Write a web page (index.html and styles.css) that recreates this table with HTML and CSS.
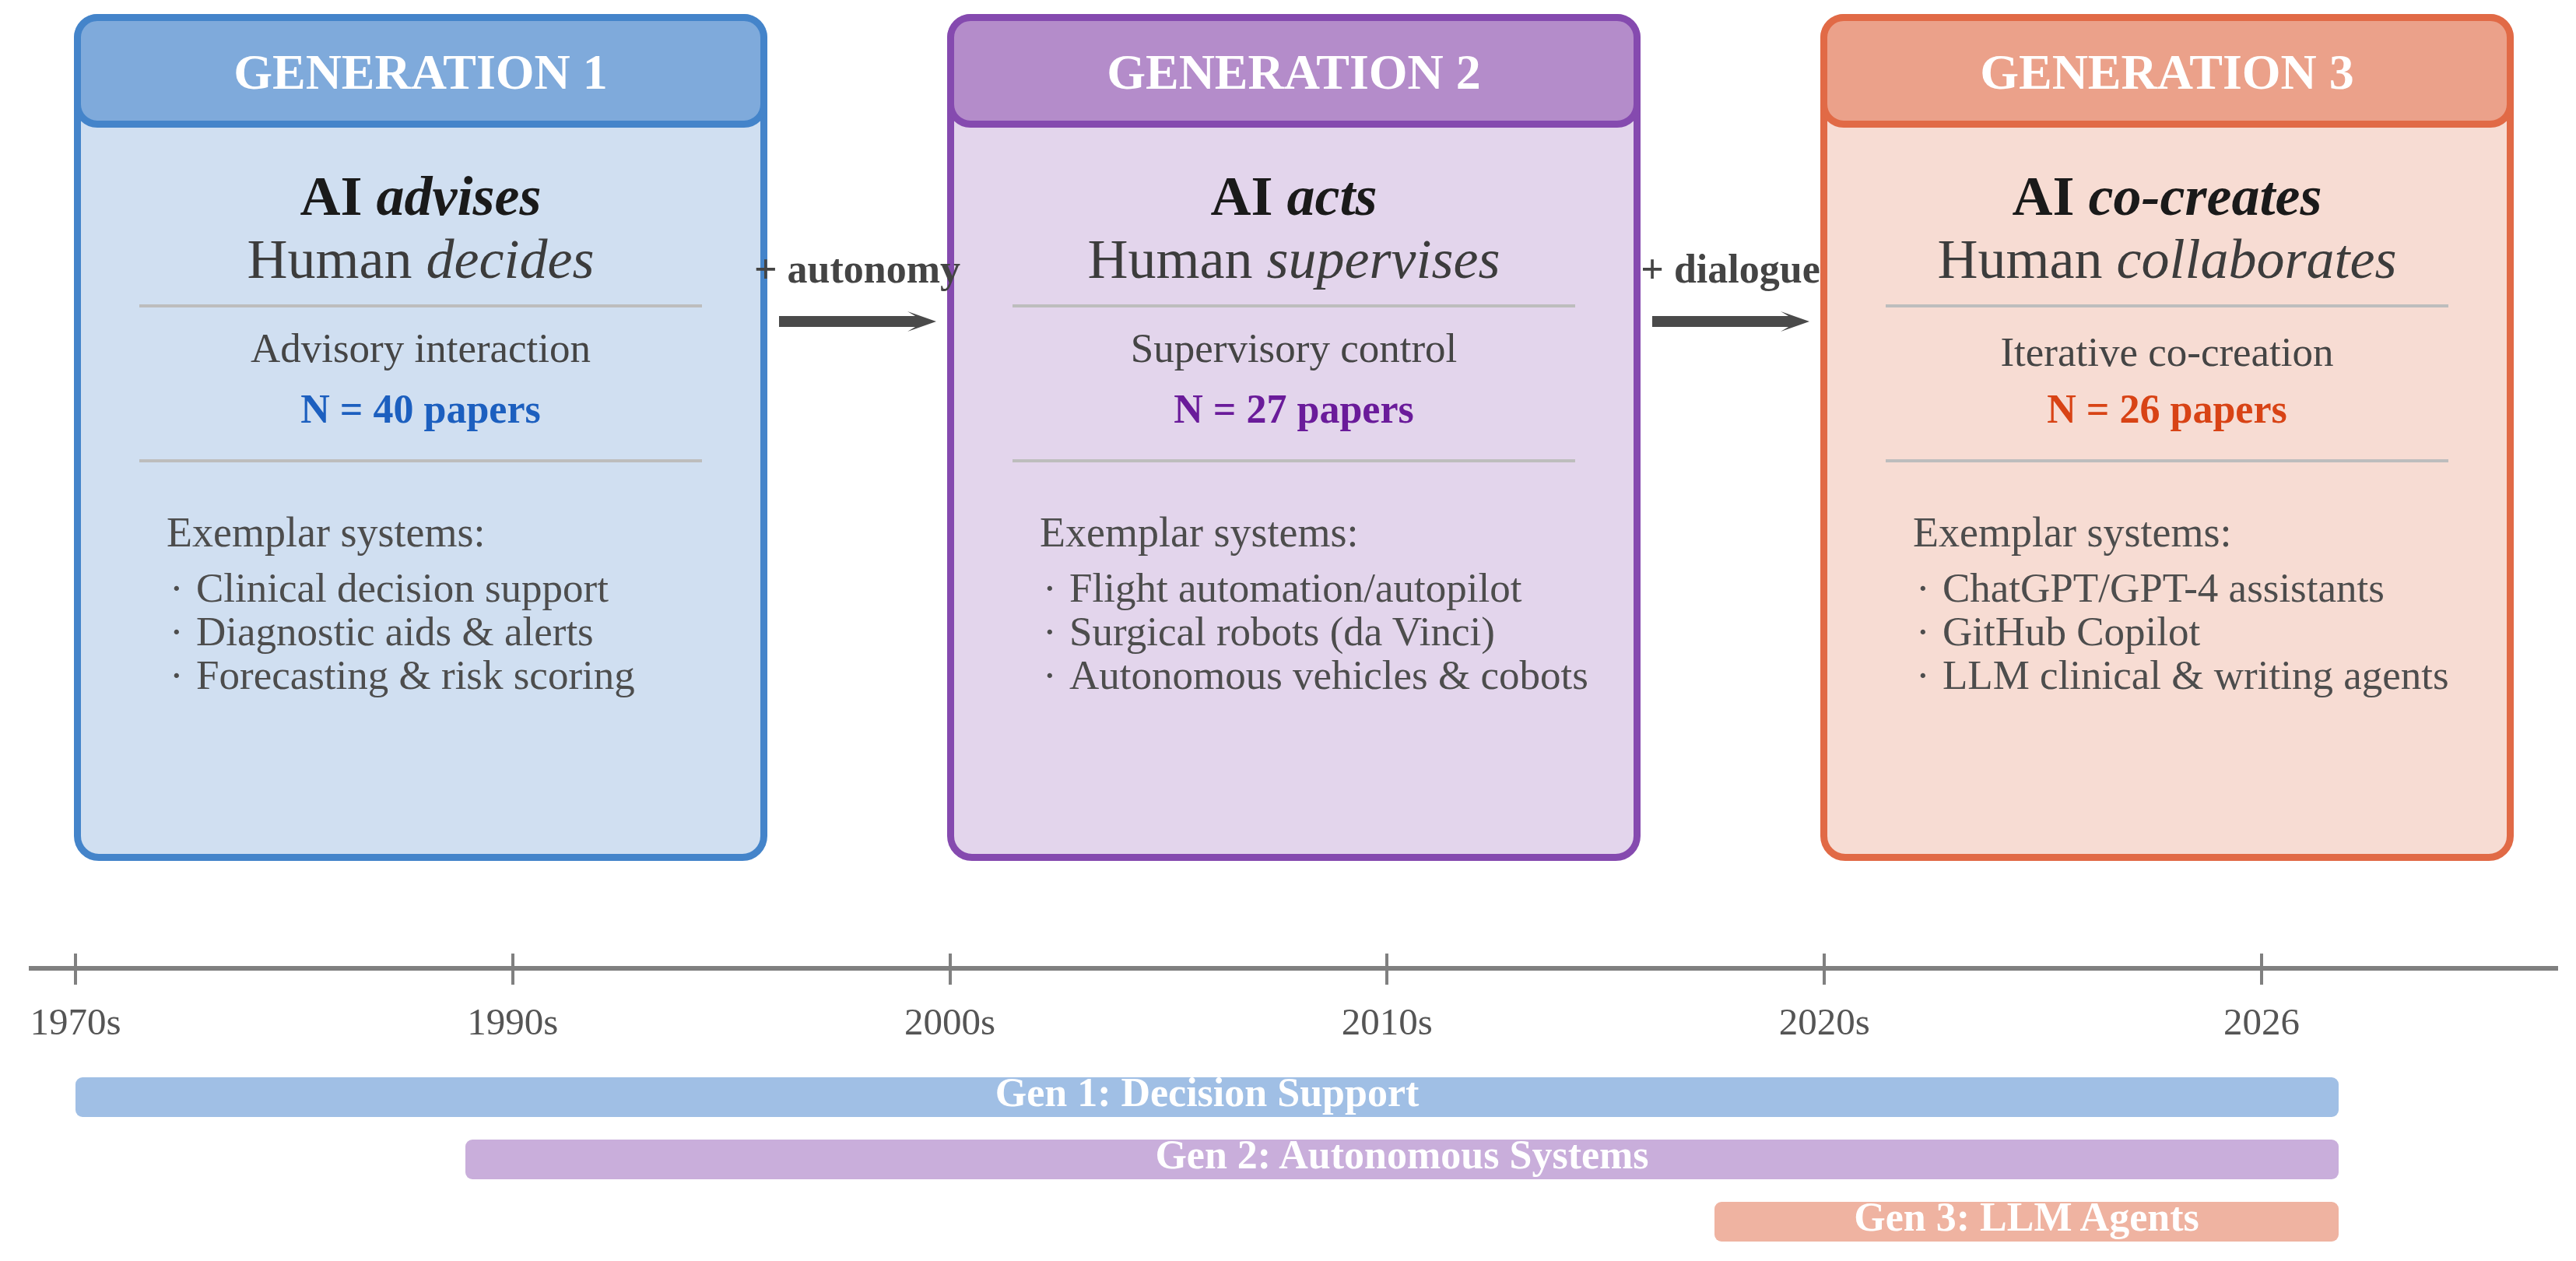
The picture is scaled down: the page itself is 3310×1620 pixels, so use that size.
FILE: index.html
```html
<!DOCTYPE html>
<html lang="en">
<head>
<meta charset="utf-8">
<title>Three generations of human–AI interaction</title>
<link rel="stylesheet" href="styles.css">
</head>
<body>
<div class="figure">
  <div class="cards">
    <section class="card card-g1">
      <div class="card-head">GENERATION 1</div>
      <div class="role-ai">AI <em>advises</em></div>
      <div class="role-human">Human <em>decides</em></div>
      <div class="rule"></div>
      <div class="mode">Advisory interaction</div>
      <div class="count">N = 40 papers</div>
      <div class="rule rule-2"></div>
      <div class="examples">
        <div class="examples-title">Exemplar systems:</div>
        <ul class="examples-list">
          <li><span class="dot">·</span>Clinical decision support</li>
          <li><span class="dot">·</span>Diagnostic aids &amp; alerts</li>
          <li><span class="dot">·</span>Forecasting &amp; risk scoring</li>
        </ul>
      </div>
    </section>

    <div class="link">
      <div class="link-label">+ autonomy</div>
      <svg class="link-arrow" viewBox="0 0 202 30" aria-hidden="true"><path d="M0 8 H175 L165 2 L202 15 L165 28 L175 22 H0 Z"/></svg>
    </div>

    <section class="card card-g2">
      <div class="card-head">GENERATION 2</div>
      <div class="role-ai">AI <em>acts</em></div>
      <div class="role-human">Human <em>supervises</em></div>
      <div class="rule"></div>
      <div class="mode">Supervisory control</div>
      <div class="count">N = 27 papers</div>
      <div class="rule rule-2"></div>
      <div class="examples">
        <div class="examples-title">Exemplar systems:</div>
        <ul class="examples-list">
          <li><span class="dot">·</span>Flight automation/autopilot</li>
          <li><span class="dot">·</span>Surgical robots (da Vinci)</li>
          <li><span class="dot">·</span>Autonomous vehicles &amp; cobots</li>
        </ul>
      </div>
    </section>

    <div class="link">
      <div class="link-label">+ dialogue</div>
      <svg class="link-arrow" viewBox="0 0 202 30" aria-hidden="true"><path d="M0 8 H175 L165 2 L202 15 L165 28 L175 22 H0 Z"/></svg>
    </div>

    <section class="card card-g3">
      <div class="card-head">GENERATION 3</div>
      <div class="role-ai">AI <em>co-creates</em></div>
      <div class="role-human">Human <em>collaborates</em></div>
      <div class="rule"></div>
      <div class="mode">Iterative co-creation</div>
      <div class="count">N = 26 papers</div>
      <div class="rule rule-2"></div>
      <div class="examples">
        <div class="examples-title">Exemplar systems:</div>
        <ul class="examples-list">
          <li><span class="dot">·</span>ChatGPT/GPT-4 assistants</li>
          <li><span class="dot">·</span>GitHub Copilot</li>
          <li><span class="dot">·</span>LLM clinical &amp; writing agents</li>
        </ul>
      </div>
    </section>
  </div>

  <div class="timeline">
    <div class="axis-line"></div>
    <div class="ticks">
      <div class="tick"><div class="tick-mark"></div><div class="tick-label">1970s</div></div>
      <div class="tick"><div class="tick-mark"></div><div class="tick-label">1990s</div></div>
      <div class="tick"><div class="tick-mark"></div><div class="tick-label">2000s</div></div>
      <div class="tick"><div class="tick-mark"></div><div class="tick-label">2010s</div></div>
      <div class="tick"><div class="tick-mark"></div><div class="tick-label">2020s</div></div>
      <div class="tick"><div class="tick-mark"></div><div class="tick-label">2026</div></div>
    </div>
    <div class="bars">
      <div class="bar bar-g1" style="margin-left:60px;width:2908px">Gen 1: Decision Support</div>
      <div class="bar bar-g2" style="margin-left:561px;width:2407px">Gen 2: Autonomous Systems</div>
      <div class="bar bar-g3" style="margin-left:2166px;width:802px">Gen 3: LLM Agents</div>
    </div>
  </div>
</div>
</body>
</html>
```

FILE: styles.css
```css
html, body {
  margin: 0;
  padding: 0;
  background: #ffffff;
}

body {
  font-family: "Liberation Serif", "Times New Roman", serif;
}

.figure {
  width: 3310px;
  height: 1620px;
  padding-top: 18px;
  box-sizing: border-box;
  overflow: hidden;
}

/* ---------- cards row ---------- */
.cards {
  display: flex;
  padding-left: 95px;
}

.card {
  flex: none;
  width: 891px;
  height: 1088px;
  box-sizing: border-box;
  border: 9px solid;
  border-radius: 32px;
  display: flex;
  flex-direction: column;
  text-align: center;
}

.card-head {
  margin: -9px -9px 0;
  height: 146px;
  box-sizing: border-box;
  border: 9px solid;
  border-radius: 30px;
  padding-top: 3px;
  color: #ffffff;
  font-weight: bold;
  font-size: 64px;
  line-height: 125px;
}

.role-ai {
  margin-top: 48px;
  font-size: 72px;
  line-height: 81px;
  font-weight: bold;
  color: #1a1a1a;
}

.role-human {
  font-size: 72px;
  line-height: 81px;
  color: #3c3c3c;
}

.rule {
  height: 4px;
  margin: 17px 75px 0;
  background: #bdbdbd;
}

.rule-2 {
  margin-top: 32px;
}

.mode {
  margin-top: 20px;
  font-size: 53px;
  line-height: 64px;
  color: #454545;
}

.count {
  margin-top: 15px;
  font-size: 52px;
  line-height: 64px;
  font-weight: bold;
}

.examples {
  margin-top: 58px;
  padding-left: 110px;
  text-align: left;
  color: #4d4d4d;
}

.examples-title {
  font-size: 54px;
  line-height: 64px;
}

.examples-list {
  list-style: none;
  margin: 11px 0 0;
  padding: 0;
}

.examples-list li {
  display: flex;
  font-size: 53px;
  line-height: 56px;
  white-space: nowrap;
}

.dot {
  flex: none;
  width: 38px;
  padding-left: 4px;
  box-sizing: border-box;
}

/* per-generation colours */
.card-g1 { border-color: #4484ca; background: #d0dff1; }
.card-g1 .card-head { border-color: #4484ca; background: #7faadb; }
.card-g1 .count { color: #1c5fbf; }

.card-g2 { border-color: #854aaf; background: #e3d5ec; }
.card-g2 .card-head { border-color: #854aaf; background: #b48cca; }
.card-g2 .count { color: #6a1b9a; }

.card-g3 { border-color: #e16a46; background: #f7dcd3; }
.card-g3 .card-head { border-color: #e16a46; background: #eba18a; }
.card-g3 .count { color: #d84315; margin-top: 10px; }
.card-g3 .mode { margin-top: 25px; }

/* ---------- connectors ---------- */
.link {
  flex: none;
  width: 231px;
  padding-top: 298px;
  display: flex;
  flex-direction: column;
  align-items: center;
}

.link-label {
  position: relative;
  z-index: 1;
  white-space: nowrap;
  font-weight: bold;
  font-size: 52px;
  line-height: 60px;
  color: #444444;
}

.link-arrow {
  display: block;
  margin-top: 22px;
  width: 202px;
  height: 30px;
  fill: #4a4a4a;
}

/* ---------- timeline ---------- */
.timeline {
  margin-top: 135px;
  margin-left: 37px;
  width: 3250px;
}

.axis-line {
  height: 6px;
  background: #808080;
}

.ticks {
  display: flex;
  gap: 561.8px;
  margin-top: -22px;
  padding-left: 60px;
}

.tick {
  width: 0;
  display: flex;
  flex-direction: column;
  align-items: center;
}

.tick-mark {
  flex: none;
  width: 4px;
  height: 40px;
  background: #808080;
}

.tick-label {
  margin-top: 18px;
  font-size: 49px;
  line-height: 60px;
  color: #555555;
  white-space: nowrap;
}

.bars {
  margin-top: 41px;
  display: flex;
  flex-direction: column;
  gap: 29px;
}

.bar {
  height: 51px;
  border-radius: 9px;
  color: #ffffff;
  font-weight: bold;
  font-size: 52px;
  line-height: 39px;
  text-align: center;
  white-space: nowrap;
}

.bar-g1 { background: #a0bfe5; }
.bar-g2 { background: #c9aedb; }
.bar-g3 { background: #efb3a1; }
```
